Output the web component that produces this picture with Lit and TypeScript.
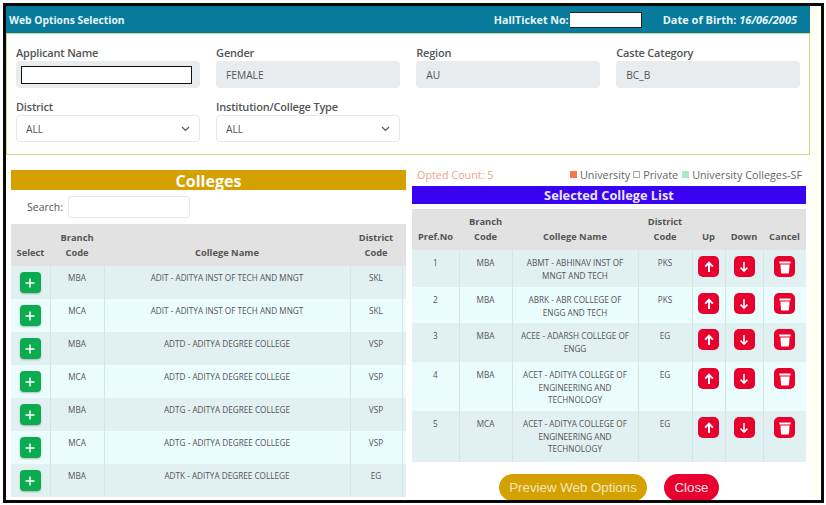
import { LitElement, html, css, svg } from "lit";
import { customElement } from "lit/decorators.js";

const colleges = [
  ["MBA", "ADIT - ADITYA INST OF TECH AND MNGT", "SKL"],
  ["MCA", "ADIT - ADITYA INST OF TECH AND MNGT", "SKL"],
  ["MBA", "ADTD - ADITYA DEGREE COLLEGE", "VSP"],
  ["MCA", "ADTD - ADITYA DEGREE COLLEGE", "VSP"],
  ["MBA", "ADTG - ADITYA DEGREE COLLEGE", "VSP"],
  ["MCA", "ADTG - ADITYA DEGREE COLLEGE", "VSP"],
  ["MBA", "ADTK - ADITYA DEGREE COLLEGE", "EG"],
];
const selected = [
  ["1", "MBA", "ABMT - ABHINAV INST OF MNGT AND TECH", "PKS", "r2"],
  ["2", "MBA", "ABRK - ABR COLLEGE OF ENGG AND TECH", "PKS", "r2b"],
  ["3", "MBA", "ACEE - ADARSH COLLEGE OF ENGG", "EG", "r2c"],
  ["4", "MBA", "ACET - ADITYA COLLEGE OF ENGINEERING AND TECHNOLOGY", "EG", "r3"],
  ["5", "MCA", "ACET - ADITYA COLLEGE OF ENGINEERING AND TECHNOLOGY", "EG", "r3"],
];
const plus = svg`<path d="M8 3.5v9M3.5 8h9" stroke="#fff" stroke-width="1.5" fill="none"/>`;
const up = svg`<path d="M8 13V4M4.2 7.6 8 3.6l3.8 4" stroke="#fff" stroke-width="2" fill="none"/>`;
const down = svg`<path d="M8 3v9M4.6 8.6 8 12.2l3.4-3.6" stroke="#fff" stroke-width="1.6" fill="none"/>`;
const trash = svg`<path d="M2.4 2.4h11.2v2.2H2.4zM3.4 5.4h9.2l-.6 8.4a.8.8 0 0 1-.8.7H4.8a.8.8 0 0 1-.8-.7z" fill="#fff"/>`;
const icon = (p: unknown) => html`<svg viewBox="0 0 16 16" width="16" height="16">${p}</svg>`;

@customElement("app-root")
export class AppRoot extends LitElement {
  static styles = css`
    :host { display: block; width: 826px; height: 505px; background: #fff; font-family: "Open Sans", sans-serif; color: #555; overflow: hidden; box-sizing: border-box; padding: 3px 2px 2px 3px; }
    * { box-sizing: border-box; }
    .frame { height: 500px; border: 3px solid #0a0a0a; background: #fffff4; overflow: hidden; }
    .modal { width: 804px; height: 100%; background: #fff; display: flex; flex-direction: column; }
    .head { height: 27px; flex: none; background: #087b9c; color: #e6f4f8; font-weight: 700; font-size: 10.3px; display: flex; align-items: center; padding-left: 3px; }
    .hall { margin-left: auto; display: flex; align-items: center; font-size: 10.7px; }
    .hall-box { width: 72px; height: 16px; background: #fff; border: 1px solid #222; border-width: 1px 1px 1px 0; margin: 0 21px 0 1px; }
    .dob { font-size: 11px; margin-right: 13px; }
    .dob i { font-style: italic; }
    .card { height: 122px; flex: none; border: 1px solid #c8d88a; padding: 11px 9px 0 9px; display: grid; grid-template-columns: repeat(4, 183.5px); column-gap: 16.6px; grid-template-rows: 54px 47px; align-content: start; }
    .f label { display: block; font-size: 11px; letter-spacing: -0.2px; font-weight: 600; color: #555; line-height: 16px; height: 16px; }
    .val { height: 27px; background: #e9ecef; border-radius: 4px; font-size: 10.2px; display: flex; align-items: center; padding-left: 10px; color: #555; }
    .name-val { padding-left: 5px; }
    .name-box { width: 171px; height: 18px; background: #fff; border: 1px solid #111; }
    .sel { height: 27px; background: #fff; border: 1px solid #e6e8ea; border-radius: 4px; font-size: 10.2px; display: flex; align-items: center; justify-content: space-between; padding: 0 9px 0 9px; color: #555; }
    .cols { flex: 1; min-height: 0; display: flex; gap: 6px; padding-left: 5px; align-items: flex-start; }
    .left { width: 395px; height: 100%; padding-top: 15px; overflow: hidden; flex: none; }
    .right { width: 394px; flex: none; padding-top: 13px; height: 100%; display: flex; flex-direction: column; overflow: hidden; }
    .gold { height: 20px; background: #d4a100; color: #fff; font-weight: 700; font-size: 16px; line-height: 22px; text-align: center; }
    .search { height: 34px; display: flex; align-items: center; font-size: 10.5px; padding-left: 16px; gap: 5px; color: #555; }
    .search span { display: block; width: 122px; height: 22px; border: 1px solid #e6e8ea; border-radius: 3px; background: #fff; }
    table { border-collapse: collapse; table-layout: fixed; width: 100%; }
    th { background: #e2e2e2; font-size: 9.3px; font-weight: 700; color: #555; text-align: center; vertical-align: bottom; line-height: 15px; padding: 0 0 6px; border: 0; }
    td { font-size: 8.2px; color: #555; text-align: center; vertical-align: top; border-right: 1px solid #d5e4e4; padding: 0; }
    td:last-child { border-right: 0; }
    tbody tr:nth-child(odd) td { background: #e1f0f0; }
    tbody tr:nth-child(even) td { background: #ebfcfc; }
    .lt tr { height: 33px; }
    .lt thead tr { height: 42px; }
    .lt td { padding-top: 6px; }
    .lt td.act { padding-top: 6px; }
    .c1 { width: 39px; } .c2 { width: 54px; } .c3 { width: 246px; } .c4 { width: 52px; } .c5 { width: 4px; }
    .add { display: block; width: 21px; height: 21px; margin: 0 auto; background: #0bab50; border-radius: 4px; box-shadow: 0 1px 2px rgba(0,0,0,.25); padding: 2.5px; }
    .meta { height: 13px; flex: none; display: flex; justify-content: space-between; align-items: center; font-size: 10.8px; color: #666; white-space: nowrap; padding: 0 4px 0 5px; }
    .opted { color: #e9a583; }
    .legend { display: flex; align-items: center; gap: 3px; }
    .sw { width: 7px; height: 7px; display: inline-block; }
    .sw.u { background: #f4794c; }
    .sw.p { background: #fff; border: 1px solid #aaa; }
    .sw.s { background: #a9ecc0; margin-left: 1px; }
    .blue { height: 18px; margin-top: 5px; flex: none; background: #3a02f2; color: #e8e6ff; font-weight: 700; font-size: 12.8px; line-height: 18px; text-align: center; }
    .rt { margin-top: 5px; }
    .rt thead tr { height: 41px; }
    .rt td { padding-top: 7px; line-height: 12.5px; }
    .r2 { height: 37px; } .r2b { height: 36px; } .r2c { height: 39px; } .r3 { height: 49px; }
    .rt tr.r3:last-child { height: 51px; }
    .rt td.name { padding: 7px 8px 0; }
    .rt td.act { padding-top: 6px; padding-left: 0; padding-right: 0; border-right: 1px solid #d5e4e4; }
    .rt td.act:last-child { border-right: 0; }
    .red { display: block; width: 21px; height: 21px; margin: 0 auto; background: #e8002e; border-radius: 5px; padding: 2.5px; }
    .d1 { width: 47px; } .d2 { width: 53px; } .d3 { width: 126px; } .d4 { width: 54px; } .d5 { width: 33px; } .d6 { width: 38px; } .d7 { width: 43px; }
    .buttons { display: flex; justify-content: flex-start; gap: 17px; padding: 12px 0 0 87px; flex: none; }
    .btn { height: 27px; border-radius: 14px; font-family: "Liberation Sans", Arial, sans-serif; font-size: 13.3px; display: flex; align-items: center; justify-content: center; color: #f3e6bd; }
    .preview { width: 148px; background: #d4a100; }
    .close { width: 55px; background: #e8002e; color: #ffe3e3; }
  `;

  render() {
    return html`<div class="frame"><div class="modal">
      <div class="head">
        <span>Web Options Selection</span>
        <div class="hall">HallTicket No:<span class="hall-box"></span></div>
        <span class="dob">Date of Birth: <i>16/06/2005</i></span>
      </div>
      <div class="card">
        <div class="f"><label>Applicant Name</label><div class="val name-val"><span class="name-box"></span></div></div>
        <div class="f"><label>Gender</label><div class="val">FEMALE</div></div>
        <div class="f"><label>Region</label><div class="val">AU</div></div>
        <div class="f"><label>Caste Category</label><div class="val">BC_B</div></div>
        <div class="f"><label>District</label>${this.sel()}</div>
        <div class="f"><label>Institution/College Type</label>${this.sel()}</div>
      </div>
      <div class="cols">
        <div class="left">
          <div class="gold">Colleges</div>
          <div class="search">Search: <span></span></div>
          <table class="lt">
            <colgroup><col class="c1"/><col class="c2"/><col class="c3"/><col class="c4"/><col class="c5"/></colgroup>
            <thead><tr><th>Select</th><th>Branch<br/>Code</th><th>College Name</th><th>District<br/>Code</th><th></th></tr></thead>
            <tbody>${colleges.map((c) => html`<tr>
              <td class="act"><span class="add">${icon(plus)}</span></td>
              <td>${c[0]}</td><td>${c[1]}</td><td>${c[2]}</td><td></td></tr>`)}</tbody>
          </table>
        </div>
        <div class="right">
          <div class="meta"><span class="opted">Opted Count: 5</span>
            <span class="legend"><i class="sw u"></i> University <i class="sw p"></i> Private <i class="sw s"></i> University Colleges-SF</span></div>
          <div class="blue">Selected College List</div>
          <table class="rt">
            <colgroup><col class="d1"/><col class="d2"/><col class="d3"/><col class="d4"/><col class="d5"/><col class="d6"/><col class="d7"/></colgroup>
            <thead><tr><th>Pref.No</th><th>Branch<br/>Code</th><th>College Name</th><th>District<br/>Code</th><th>Up</th><th>Down</th><th>Cancel</th></tr></thead>
            <tbody>${selected.map((s) => html`<tr class=${s[4]}>
              <td>${s[0]}</td><td>${s[1]}</td><td class="name">${s[2]}</td><td>${s[3]}</td>
              <td class="act"><span class="red">${icon(up)}</span></td>
              <td class="act"><span class="red">${icon(down)}</span></td>
              <td class="act"><span class="red">${icon(trash)}</span></td></tr>`)}</tbody>
          </table>
          <div class="buttons"><span class="btn preview">Preview Web Options</span><span class="btn close">Close</span></div>
        </div>
      </div>
    </div></div>`;
  }
  sel() {
    return html`<div class="sel">ALL<svg width="9" height="6" viewBox="0 0 9 6"><path d="M1 1l3.5 3.5L8 1" stroke="#555" stroke-width="1.2" fill="none"/></svg></div>`;
  }
}
